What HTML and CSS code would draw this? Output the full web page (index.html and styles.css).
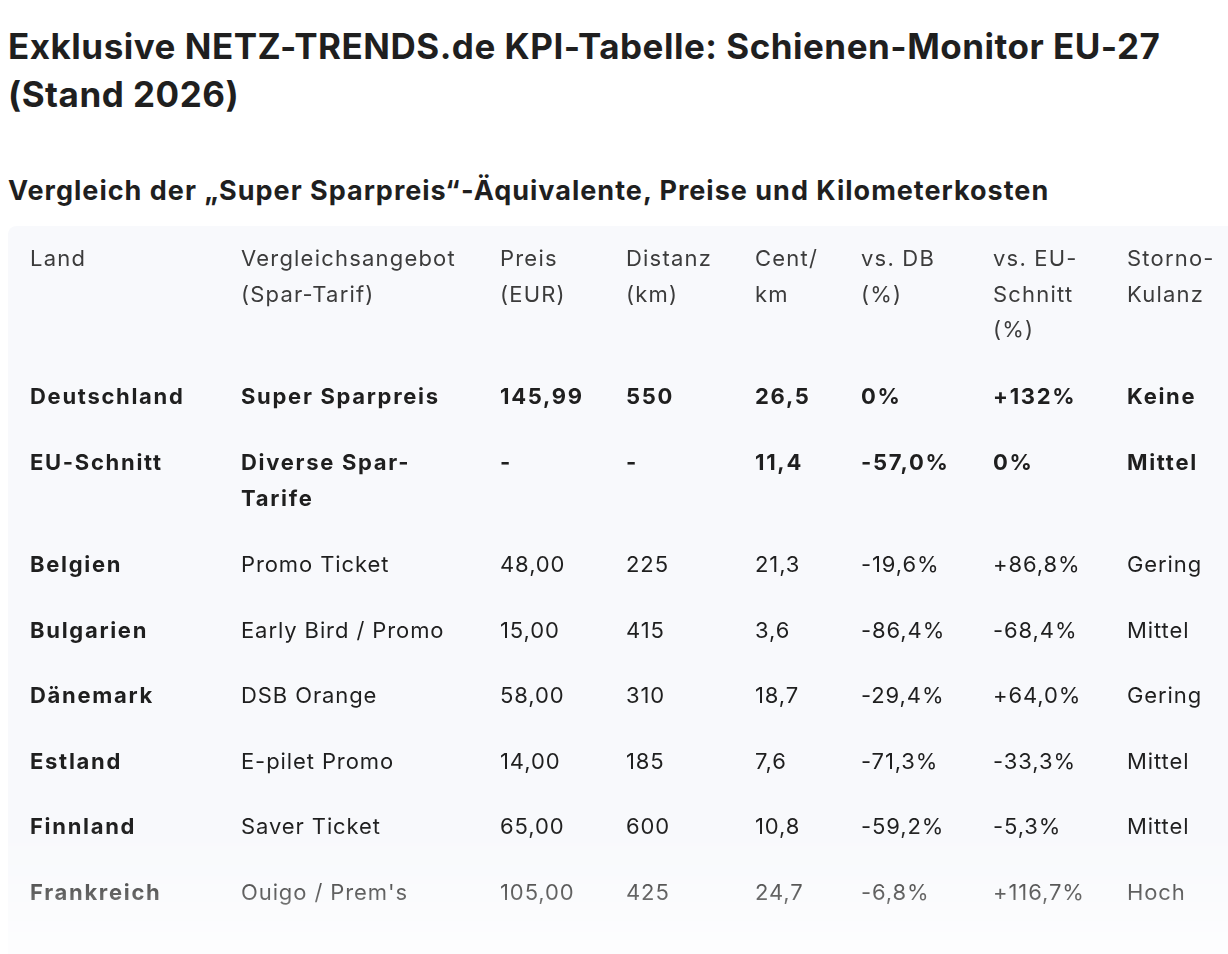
FILE: index.html
```html
<!DOCTYPE html>
<html lang="de">
<head>
<meta charset="utf-8">
<title>KPI-Tabelle</title>
<link rel="stylesheet" href="styles.css">
</head>
<body>
<main class="page">
  <h1 class="title">Exklusive NETZ-TRENDS.de KPI-Tabelle: Schienen-Monitor EU-27 (Stand 2026)</h1>
  <h2 class="subtitle">Vergleich der „Super Sparpreis“-Äquivalente, Preise und Kilometerkosten</h2>
  <div class="table-wrap">
    <table class="kpi">
      <colgroup>
        <col class="c-land"><col class="c-offer"><col class="c-price"><col class="c-dist"><col class="c-cent"><col class="c-db"><col class="c-eu"><col class="c-storno">
      </colgroup>
      <thead>
        <tr>
          <th>Land</th>
          <th>Vergleichsangebot (Spar-Tarif)</th>
          <th>Preis (EUR)</th>
          <th>Distanz (km)</th>
          <th>Cent/ km</th>
          <th>vs. DB (%)</th>
          <th>vs. EU-Schnitt (%)</th>
          <th>Storno-Kulanz</th>
        </tr>
      </thead>
      <tbody>
        <tr class="strong">
          <td>Deutschland</td><td>Super Sparpreis</td><td>145,99</td><td>550</td><td>26,5</td><td>0%</td><td>+132%</td><td>Keine</td>
        </tr>
        <tr class="strong">
          <td>EU-Schnitt</td><td>Diverse Spar-Tarife</td><td>-</td><td>-</td><td>11,4</td><td>-57,0%</td><td>0%</td><td>Mittel</td>
        </tr>
        <tr>
          <td class="country">Belgien</td><td>Promo Ticket</td><td>48,00</td><td>225</td><td>21,3</td><td>-19,6%</td><td>+86,8%</td><td>Gering</td>
        </tr>
        <tr>
          <td class="country">Bulgarien</td><td>Early Bird / Promo</td><td>15,00</td><td>415</td><td>3,6</td><td>-86,4%</td><td>-68,4%</td><td>Mittel</td>
        </tr>
        <tr>
          <td class="country">Dänemark</td><td>DSB Orange</td><td>58,00</td><td>310</td><td>18,7</td><td>-29,4%</td><td>+64,0%</td><td>Gering</td>
        </tr>
        <tr>
          <td class="country">Estland</td><td>E-pilet Promo</td><td>14,00</td><td>185</td><td>7,6</td><td>-71,3%</td><td>-33,3%</td><td>Mittel</td>
        </tr>
        <tr>
          <td class="country">Finnland</td><td>Saver Ticket</td><td>65,00</td><td>600</td><td>10,8</td><td>-59,2%</td><td>-5,3%</td><td>Mittel</td>
        </tr>
        <tr>
          <td class="country">Frankreich</td><td>Ouigo / Prem's</td><td>105,00</td><td>425</td><td>24,7</td><td>-6,8%</td><td>+116,7%</td><td>Hoch</td>
        </tr>
      </tbody>
    </table>
  </div>
</main>
</body>
</html>
```
FILE: styles.css
```css
html, body {
  margin: 0;
  padding: 0;
  background: #ffffff;
  overflow: hidden;
}

body {
  font-family: Inter, Roboto, "Noto Sans", "Liberation Sans", sans-serif;
  color: #1f1f1f;
}

.page {
  padding: 22px 0 0 8px;
}

.title {
  margin: 0;
  font-size: 35px;
  line-height: 48px;
  font-weight: 700;
  letter-spacing: 0.5px;
  padding-right: 40px;
}

.subtitle {
  margin: 55px 0 0 0;
  font-size: 27px;
  line-height: 36px;
  font-weight: 700;
  letter-spacing: 1px;
}

.table-wrap {
  margin-top: 17px;
  background: #f8f9fc;
  border-radius: 8px 0 0 8px;
  height: 760px;
  overflow: hidden;
  -webkit-mask-image: linear-gradient(to bottom, #000 0, #000 600px, rgba(0,0,0,0.72) 665px, rgba(0,0,0,0.25) 728px);
  mask-image: linear-gradient(to bottom, #000 0, #000 600px, rgba(0,0,0,0.72) 665px, rgba(0,0,0,0.25) 728px);
}

.kpi {
  border-collapse: collapse;
  margin-left: 11px;
  font-size: 22px;
  line-height: 35.5px;
  letter-spacing: 0.9px;
}

.c-land { width: 211px; }
.c-offer { width: 259px; }
.c-price { width: 126px; }
.c-dist { width: 129px; }
.c-cent { width: 106px; }
.c-db { width: 132px; }
.c-eu { width: 134px; }
.c-storno { width: 110px; }

.kpi th,
.kpi td {
  text-align: left;
  vertical-align: top;
  padding: 15px 11px;
  font-weight: 400;
}

.kpi th {
  color: #3c3c3c;
  letter-spacing: 1.2px;
  padding-bottom: 16px;
}

.kpi tr.strong td {
  padding-bottom: 16px;
}

.kpi tr.strong td,
.kpi td.country {
  font-weight: 700;
  letter-spacing: 1.7px;
}
```
